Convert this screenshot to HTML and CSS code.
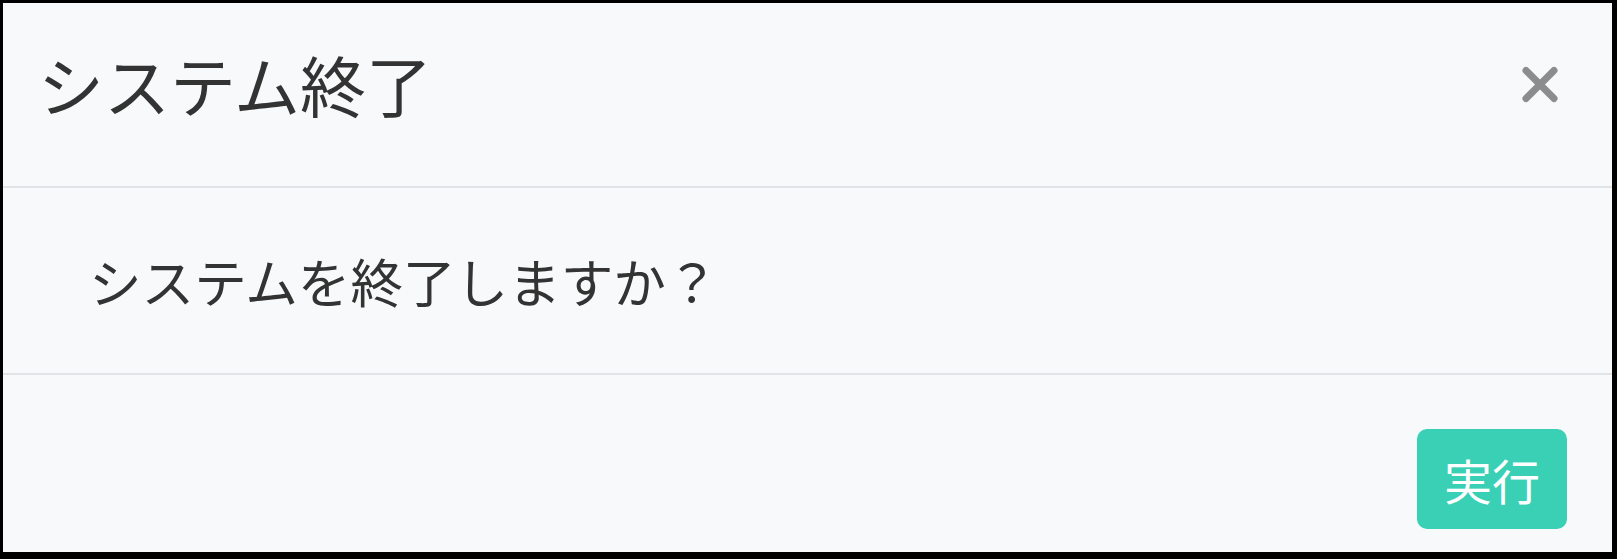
FILE: index.html
```html
<!DOCTYPE html>
<html lang="ja">
<head>
    <meta charset="UTF-8">
    <meta name="viewport" content="width=device-width, initial-scale=1.0">
    <title>システム終了</title>
    <link rel="stylesheet" href="styles.css">
</head>
<body>
    <div class="modal">
        <div class="modal-header">
            <div class="modal-title">システム終了</div>
            <button class="close" type="button" aria-label="Close">
                <svg width="36" height="37" viewBox="0 0 36 37">
                    <path d="M4 4.5 L32 32.5 M32 4.5 L4 32.5" stroke="#8a8c8e" stroke-width="7" stroke-linecap="round"/>
                </svg>
            </button>
        </div>
        <div class="modal-body">
            <p>システムを終了しますか？</p>
        </div>
        <div class="modal-footer">
            <button class="btn-run" type="button">実行</button>
        </div>
    </div>
</body>
</html>
```

FILE: styles.css
```css
html, body {
    margin: 0;
    padding: 0;
}
body {
    font-family: "Noto Sans CJK JP", "Noto Sans", sans-serif;
    color: #333;
    background: #000;
}
.modal {
    box-sizing: border-box;
    width: 1617px;
    height: 559px;
    border-style: solid;
    border-color: #000;
    border-width: 3px 5px 7px 3px;
    background: #f8f9fa;
    display: flex;
    flex-direction: column;
}
.modal-header {
    height: 185px;
    box-sizing: border-box;
    display: flex;
    align-items: center;
    justify-content: space-between;
    padding: 0 54px 24px 35px;
    border-bottom: 2px solid #e1e4e7;
}
.modal-title {
    font-size: 66px;
    line-height: 1;
    color: #333;
}
.close {
    background: none;
    border: none;
    padding: 0;
    margin: 0 0 -4px 0;
    display: flex;
    cursor: pointer;
}
.modal-body {
    height: 187px;
    box-sizing: border-box;
    display: flex;
    align-items: center;
    padding: 0 0 0 86px;
    border-bottom: 2px solid #e1e4e7;
}
.modal-body p {
    margin: 0;
    font-size: 52.6px;
    line-height: 1;
    color: #333;
}
.modal-footer {
    flex: 1;
    display: flex;
    justify-content: flex-end;
    align-items: flex-start;
    padding: 54px 45px 0 0;
}
.btn-run {
    font-family: inherit;
    font-size: 48px;
    line-height: 72px;
    padding: 14px 27px;
    border: none;
    border-radius: 10px;
    background: #39d0b5;
    color: #fff;
    cursor: pointer;
}
```
